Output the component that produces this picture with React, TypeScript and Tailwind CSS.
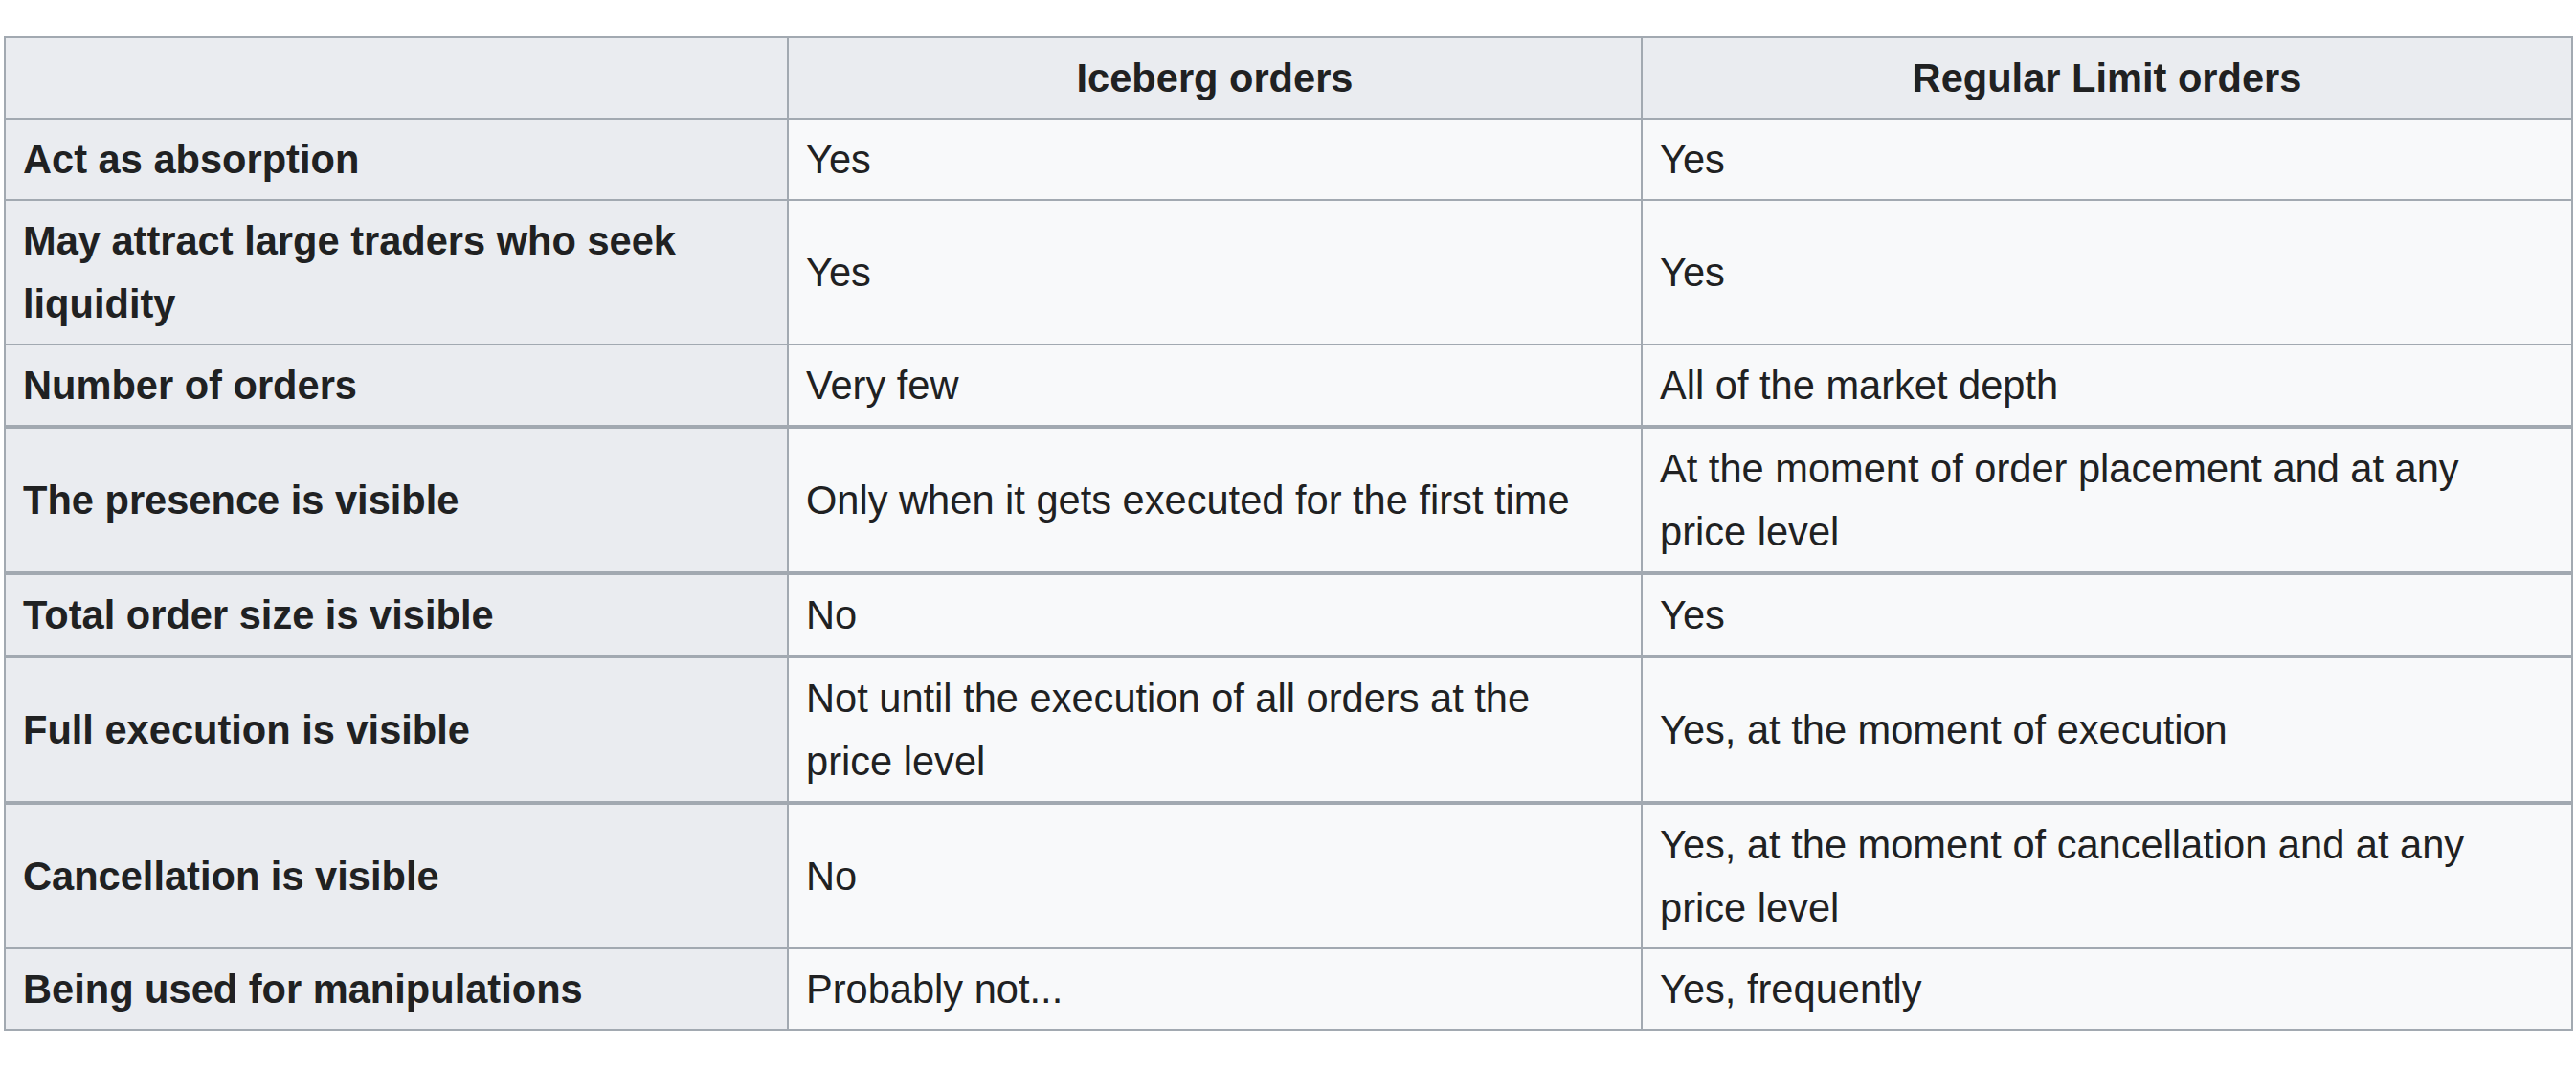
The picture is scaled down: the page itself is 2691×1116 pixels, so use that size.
import React from "react";

type Row = { label: string; a: React.ReactNode; b: React.ReactNode; thick?: boolean };

const rows: Row[] = [
  { label: "Act as absorption", a: "Yes", b: "Yes" },
  {
    label: "May attract large traders who seek liquidity",
    a: "Yes",
    b: "Yes",
  },
  { label: "Number of orders", a: "Very few", b: "All of the market depth", thick: true },
  {
    label: "The presence is visible",
    a: "Only when it gets executed for the first time",
    b: (
      <>
        At the moment of order placement and at any
        <br />
        price level
      </>
    ),
    thick: true,
  },
  { label: "Total order size is visible", a: "No", b: "Yes", thick: true },
  {
    label: "Full execution is visible",
    a: (
      <>
        Not until the execution of all orders at the
        <br />
        price level
      </>
    ),
    b: "Yes, at the moment of execution",
    thick: true,
  },
  {
    label: "Cancellation is visible",
    a: "No",
    b: (
      <>
        Yes, at the moment of cancellation and at any
        <br />
        price level
      </>
    ),
  },
  { label: "Being used for manipulations", a: "Probably not...", b: "Yes, frequently" },
];

export default function App() {
  return (
    <div
      className="min-h-screen bg-white pl-[4px] pt-[38px] text-[#202122]"
      style={{ fontFamily: '"Liberation Sans", Arial, Helvetica, sans-serif' }}
    >
      <table className="w-[2684px] table-fixed border-separate border-spacing-0 border-l-2 border-t-2 border-[#a2a9b1] text-[41.6px] leading-[66px]">
        <thead>
          <tr>
            <th className="w-[818px] border-b-2 border-r-2 border-[#a2a9b1] bg-[#eaecf0] px-[18px] py-[8.5px] align-middle"></th>
            <th className="w-[892px] border-b-2 border-r-2 border-[#a2a9b1] bg-[#eaecf0] px-[18px] py-[8.5px] text-center align-middle font-bold">
              Iceberg orders
            </th>
            <th className="w-[972px] border-b-2 border-r-2 border-[#a2a9b1] bg-[#eaecf0] px-[18px] py-[8.5px] text-center align-middle font-bold">
              Regular Limit orders
            </th>
          </tr>
        </thead>
        <tbody>
          {rows.map((r, i) => (
            <tr key={i}>
              <th
                className={
                  "border-r-2 border-[#a2a9b1] bg-[#eaecf0] px-[18px] py-[8.5px] text-left align-middle font-bold " +
                  (r.thick ? "border-b-4" : "border-b-2")
                }
              >
                {r.label}
              </th>
              <td
                className={
                  "border-r-2 border-[#a2a9b1] bg-[#f8f9fa] px-[18px] py-[8.5px] align-middle " +
                  (r.thick ? "border-b-4" : "border-b-2")
                }
              >
                {r.a}
              </td>
              <td
                className={
                  "border-r-2 border-[#a2a9b1] bg-[#f8f9fa] px-[18px] py-[8.5px] align-middle " +
                  (r.thick ? "border-b-4" : "border-b-2")
                }
              >
                {r.b}
              </td>
            </tr>
          ))}
        </tbody>
      </table>
    </div>
  );
}
